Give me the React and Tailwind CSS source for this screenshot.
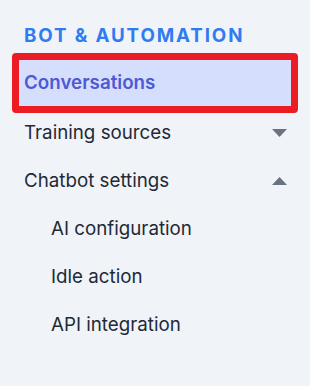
import React from 'react';

const Caret = ({ up }) => (
  <svg width="15" height="8" viewBox="0 0 15 8" className="shrink-0">
    {up ? <path d="M7.5 0L15 8H0z" fill="#6b7280" /> : <path d="M0 0h15L7.5 8z" fill="#6b7280" />}
  </svg>
);

const rows = [
  { label: 'Training sources', caret: 'down' },
  { label: 'Chatbot settings', caret: 'up' },
  { label: 'AI configuration', sub: true },
  { label: 'Idle action', sub: true },
  { label: 'API integration', sub: true },
];

export default function App() {
  return (
    <div className="w-[310px] h-[386px] bg-[#f0f4f9] pt-[22px] font-['Inter',sans-serif] text-[18.75px] leading-7 text-[#1f2937]">
      <div className="px-6 mb-[3px] font-bold tracking-[0.1em] text-[#2f7cf0]">BOT &amp; AUTOMATION</div>

      {/* active item */}
      <div className="mx-3 border-[7px] border-[#ec1c24] rounded-[4px] bg-[#d6defd] py-[9px] pl-[5px] font-semibold text-[#4c5ad6]">
        Conversations
      </div>

      <div className="flex flex-col gap-5 pt-[6px]">
        {rows.map((r) => (
          <div key={r.label} className={`flex items-center justify-between pr-[23px] ${r.sub ? 'pl-[51px]' : 'pl-6'}`}>
            <span>{r.label}</span>
            {r.caret && <Caret up={r.caret === 'up'} />}
          </div>
        ))}
      </div>
    </div>
  );
}
